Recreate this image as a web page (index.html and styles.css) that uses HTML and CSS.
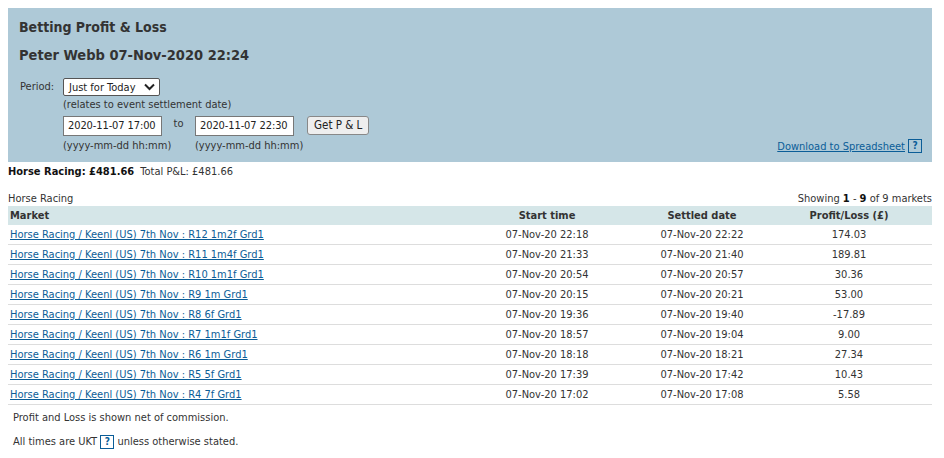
FILE: index.html
```html
<!DOCTYPE html>
<html>
	<head>
		<meta charset="UTF-8">
		<title>Betting Profit &amp; Loss</title>
		<link rel="stylesheet" href="styles.css">
	</head>
	<body>
		<div class="pl-header">
			<h1 class="pl-title">Betting Profit &amp; Loss</h1>
			<h2 class="pl-user">Peter Webb 07-Nov-2020 22:24</h2>
			<div class="pl-form">
				<div class="pl-row">
					<label class="pl-label">Period:</label>
					<div class="pl-field">
						<div class="pl-select">Just for Today
							<svg width="11" height="8" viewBox="0 0 11 8"><path d="M1 1.5 L5.5 6 L10 1.5" fill="none" stroke="#222" stroke-width="2"/></svg>
						</div>
						<div class="pl-hint">(relates to event settlement date)</div>
					</div>
				</div>
				<div class="pl-row pl-dates">
					<span class="pl-label"></span>
					<div class="pl-field pl-date">
						<div class="pl-input">2020-11-07 17:00</div>
						<div class="pl-hint">(yyyy-mm-dd hh:mm)</div>
					</div>
					<span class="pl-to">to</span>
					<div class="pl-field pl-date">
						<div class="pl-input">2020-11-07 22:30</div>
						<div class="pl-hint">(yyyy-mm-dd hh:mm)</div>
					</div>
					<div class="pl-button">Get P &amp; L</div>
					<div class="pl-download"><a href="javascript:void(0)">Download to Spreadsheet</a><span class="help">?</span></div>
				</div>
			</div>
		</div>

		<div class="pl-summary"><b>Horse Racing: &pound;481.66</b> Total P&amp;L: &pound;481.66</div>

		<div class="pl-caption">
			<span>Horse Racing</span>
			<span>Showing <b>1</b> - <b>9</b> of 9 markets</span>
		</div>
		<table class="pl-table">
			<thead>
				<tr><th class="col-market">Market</th><th class="col-start">Start time</th><th class="col-settled">Settled date</th><th>Profit/Loss (&pound;)</th></tr>
			</thead>
			<tbody>
				<tr><td class="col-market"><a href="javascript:void(0)">Horse Racing / Keenl (US) 7th Nov : R12 1m2f Grd1</a></td><td>07-Nov-20 22:18</td><td>07-Nov-20 22:22</td><td>174.03</td></tr>
				<tr><td class="col-market"><a href="javascript:void(0)">Horse Racing / Keenl (US) 7th Nov : R11 1m4f Grd1</a></td><td>07-Nov-20 21:33</td><td>07-Nov-20 21:40</td><td>189.81</td></tr>
				<tr><td class="col-market"><a href="javascript:void(0)">Horse Racing / Keenl (US) 7th Nov : R10 1m1f Grd1</a></td><td>07-Nov-20 20:54</td><td>07-Nov-20 20:57</td><td>30.36</td></tr>
				<tr><td class="col-market"><a href="javascript:void(0)">Horse Racing / Keenl (US) 7th Nov : R9 1m Grd1</a></td><td>07-Nov-20 20:15</td><td>07-Nov-20 20:21</td><td>53.00</td></tr>
				<tr><td class="col-market"><a href="javascript:void(0)">Horse Racing / Keenl (US) 7th Nov : R8 6f Grd1</a></td><td>07-Nov-20 19:36</td><td>07-Nov-20 19:40</td><td>-17.89</td></tr>
				<tr><td class="col-market"><a href="javascript:void(0)">Horse Racing / Keenl (US) 7th Nov : R7 1m1f Grd1</a></td><td>07-Nov-20 18:57</td><td>07-Nov-20 19:04</td><td>9.00</td></tr>
				<tr><td class="col-market"><a href="javascript:void(0)">Horse Racing / Keenl (US) 7th Nov : R6 1m Grd1</a></td><td>07-Nov-20 18:18</td><td>07-Nov-20 18:21</td><td>27.34</td></tr>
				<tr><td class="col-market"><a href="javascript:void(0)">Horse Racing / Keenl (US) 7th Nov : R5 5f Grd1</a></td><td>07-Nov-20 17:39</td><td>07-Nov-20 17:42</td><td>10.43</td></tr>
				<tr><td class="col-market"><a href="javascript:void(0)">Horse Racing / Keenl (US) 7th Nov : R4 7f Grd1</a></td><td>07-Nov-20 17:02</td><td>07-Nov-20 17:08</td><td>5.58</td></tr>
			</tbody>
		</table>

		<p class="pl-note">Profit and Loss is shown net of commission.</p>
		<p class="pl-note">All times are UKT <span class="help">?</span> unless otherwise stated.</p>
	</body>
</html>
```

FILE: styles.css
```css
body {
	margin: 8px 12px 8px 8px;
	font-family: "DejaVu Sans Condensed", "DejaVu Sans", sans-serif;
	font-size: 11px;
	color: #333;
}
h1, h2, p {
	margin: 0;
	padding: 0;
}
a {
	color: #0b5d97;
}
.pl-header {
	background: #aec9d7;
	padding: 10px 10px 9px 11px;
	height: 135px;
}
.pl-title {
	font-size: 14px;
	font-weight: bold;
	line-height: 18px;
}
.pl-user {
	font-size: 14.5px;
	font-weight: bold;
	line-height: 18px;
	margin-top: 10px;
}
.pl-form {
	margin-top: 14px;
}
.pl-row {
	display: flex;
	align-items: flex-start;
}
.pl-label {
	width: 43px;
	padding-left: 1px;
	line-height: 18px;
}
.pl-select {
	display: flex;
	align-items: center;
	justify-content: space-between;
	width: 86px;
	height: 16px;
	padding: 0 4px 0 5px;
	background: #fff;
	border: 1px solid #555;
	border-radius: 2px;
	color: #222;
}
.pl-hint {
	line-height: 15px;
	margin-top: 1px;
	white-space: nowrap;
}
.pl-dates {
	margin-top: 4px;
}
.pl-date {
	width: 99px;
}
.pl-input {
	width: 93px;
	height: 18px;
	line-height: 18px;
	padding-left: 4px;
	background: #fff;
	border: 1px solid #777;
	color: #222;
	white-space: nowrap;
	letter-spacing: -0.1px;
}
.pl-dates .pl-hint {
	margin-top: 2px;
}
.pl-to {
	width: 33px;
	text-align: center;
	margin-top: 1px;
}
.pl-button {
	margin-left: 13px;
	height: 17px;
	line-height: 17px;
	padding: 0 6px;
	background: #eee;
	border: 1px solid #888;
	border-radius: 3px;
	color: #222;
	font-size: 11.5px;
}
.pl-download {
	margin-left: auto;
	margin-top: 23px;
	display: flex;
	align-items: center;
	gap: 3px;
}
.help {
	display: inline-block;
	width: 12px;
	height: 12px;
	line-height: 12px;
	border: 1px solid #0b5d97;
	color: #0b5d97;
	font-weight: bold;
	text-align: center;
	font-size: 10px;
}
.pl-summary {
	margin-top: 3px;
	line-height: 14px;
}
.pl-summary b {
	color: #111;
	margin-right: 3px;
}
.pl-caption {
	display: flex;
	justify-content: space-between;
	margin-top: 13px;
	line-height: 14px;
}
.pl-caption b {
	color: #111;
}
.pl-table {
	width: 100%;
	border-collapse: collapse;
}
.pl-table th {
	background: #d5e6e8;
	height: 19px;
	font-weight: bold;
	text-align: center;
	padding: 0;
}
.pl-table td {
	height: 19px;
	border-bottom: 1px solid #ddd;
	text-align: center;
	padding: 0;
}
.pl-table .col-market {
	text-align: left;
	padding-left: 2px;
	width: 446px;
}
.pl-table .col-start {
	width: 182px;
}
.pl-table .col-settled {
	width: 128px;
}
.pl-note {
	padding-left: 5px;
	margin-top: 5px;
	line-height: 16px;
}
.pl-note + .pl-note {
	margin-top: 8px;
}
```
